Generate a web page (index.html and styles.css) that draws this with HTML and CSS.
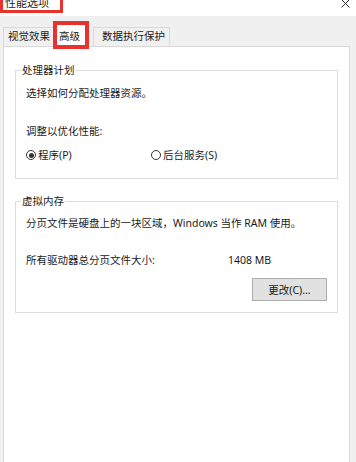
FILE: index.html
```html
<!DOCTYPE html>
<html lang="zh-CN">
<head>
<meta charset="utf-8">
<title>性能选项</title>
<link rel="stylesheet" href="styles.css">
</head>
<body>
<div class="titlebar">
  <span class="title">性能选项</span>
  <svg class="close" width="9" height="9" viewBox="0 0 9 9"><path d="M0.5 0.5 L8.5 8.5 M8.5 0.5 L0.5 8.5" stroke="#333" stroke-width="1" fill="none"/></svg>
</div>
<div class="window">
  <div class="tabs">
    <div class="tab">视觉效果</div>
    <div class="tab active">高级</div>
    <div class="tab tab-last">数据执行保护</div>
  </div>
  <div class="panel">
    <fieldset class="group">
      <legend>处理器计划</legend>
      <p class="line first">选择如何分配处理器资源。</p>
      <p class="line gap-big">调整以优化性能:</p>
      <div class="radios">
        <label class="opt"><span class="radio checked"></span>程序(P)</label>
        <label class="opt"><span class="radio"></span>后台服务(S)</label>
      </div>
    </fieldset>
    <fieldset class="group group2">
      <legend>虚拟内存</legend>
      <p class="line first2">分页文件是硬盘上的一块区域，Windows 当作 RAM 使用。</p>
      <div class="size-row">
        <span>所有驱动器总分页文件大小:</span>
        <span>1408 MB</span>
      </div>
      <div class="btn-row"><button class="btn">更改(C)...</button></div>
    </fieldset>
  </div>
</div>
</body>
</html>
```
FILE: styles.css
```css
html, body {
  margin: 0;
  padding: 0;
}
body {
  width: 356px;
  height: 462px;
  overflow: hidden;
  background: #f0f0f0;
  font-family: "Noto Sans", "Noto Sans CJK SC", sans-serif;
  font-size: 10.5px;
  color: #1a1a1a;
}
.titlebar {
  height: 16px;
  background: #ffffff;
  display: flex;
  align-items: flex-start;
}
.title {
  box-sizing: border-box;
  margin-top: -7px;
  height: 20px;
  border: 3px solid #e8322d;
  padding: 0 11px 0 2px;
  font-size: 11px;
  line-height: 14px;
  color: #222;
}
.close {
  margin-left: auto;
  margin-right: 6px;
  margin-top: -1px;
}
.window {
  padding: 0 6px 0 3px;
}
.tabs {
  display: flex;
  align-items: flex-end;
  height: 30px;
}
.tab {
  box-sizing: border-box;
  height: 19px;
  border: 1px solid #d9d9d9;
  border-bottom: none;
  background: #f0f0f0;
  padding: 0 4px 2px 4px;
  line-height: 16px;
  white-space: nowrap;
}
.tab.active {
  position: relative;
  z-index: 1;
  margin-left: 1px;
  margin-bottom: -1px;
  height: 23px;
  padding: 0 5px 0 2px;
  line-height: 22px;
  background: #ffffff;
}
.tab.active::after {
  content: "";
  position: absolute;
  top: -4px;
  left: -4px;
  right: -4px;
  bottom: -2px;
  border: 4px solid #e8322d;
}
.tab-last {
  margin-left: 7px;
  padding: 0 4px 2px 8px;
}
.panel {
  box-sizing: border-box;
  height: 420px;
  background: #ffffff;
  border: 1px solid #d9d9d9;
  padding: 16px 11px 0 11px;
}
.group {
  margin: 0;
  padding: 0 10px 16px 10px;
  border: 1px solid #dcdcdc;
  min-width: 0;
}
.group legend {
  padding: 0 1px;
  margin-left: -5px;
  line-height: 14px;
}
.group2 {
  margin-top: 15px;
  padding-bottom: 11px;
}
.line {
  margin: 0;
  line-height: 14px;
  white-space: nowrap;
}
.first {
  margin-top: 9px;
}
.first2 {
  margin-top: 8px;
}
.gap-big {
  margin-top: 24px;
}
.radios {
  display: flex;
  margin-top: 10px;
  line-height: 14px;
}
.opt {
  width: 125px;
  display: flex;
  align-items: center;
  gap: 2px;
}
.radio {
  box-sizing: border-box;
  width: 10px;
  height: 10px;
  border: 1px solid #333;
  border-radius: 50%;
  background: #fff;
  display: flex;
  align-items: center;
  justify-content: center;
}
.radio.checked::before {
  content: "";
  width: 5px;
  height: 5px;
  border-radius: 50%;
  background: #333;
}
.size-row {
  display: grid;
  grid-template-columns: 202px auto;
  margin-top: 23px;
  line-height: 14px;
}
.btn-row {
  display: flex;
  justify-content: flex-end;
  margin-top: 11px;
}
.btn {
  box-sizing: border-box;
  width: 75px;
  height: 23px;
  background: #e1e1e1;
  border: 1px solid #adadad;
  border-radius: 0;
  font-family: inherit;
  font-size: 10.5px;
  color: #1a1a1a;
  padding: 0;
}
```
